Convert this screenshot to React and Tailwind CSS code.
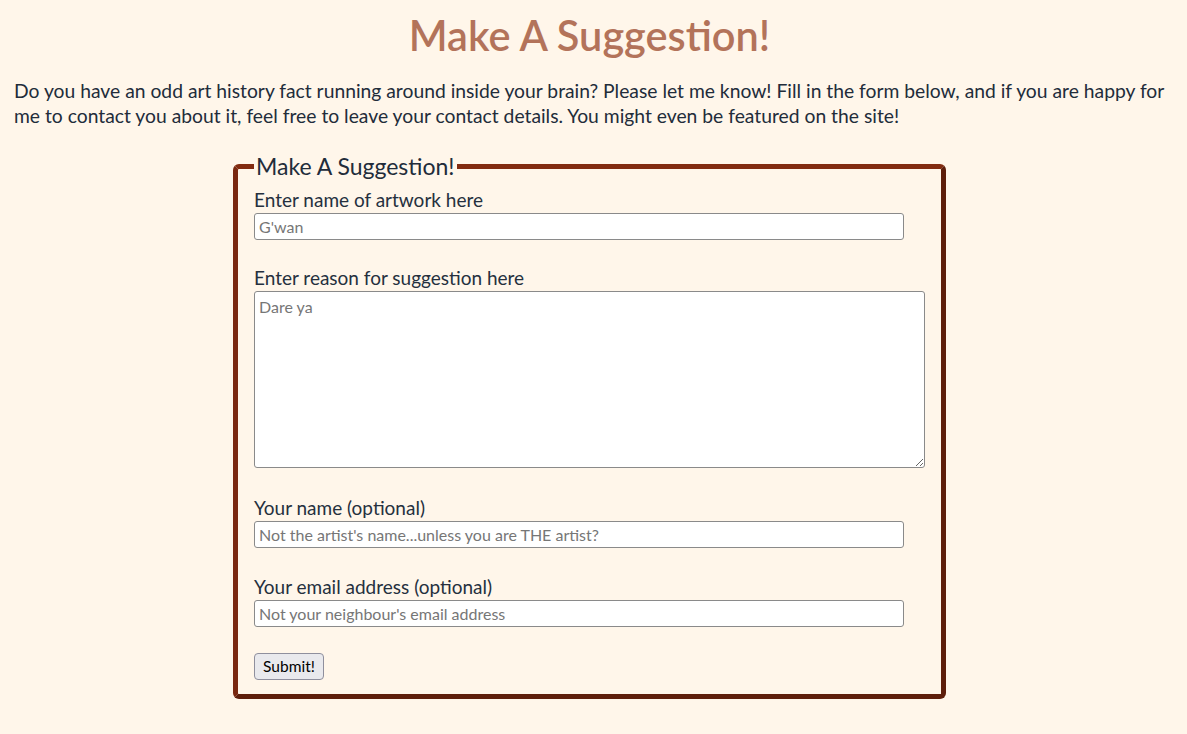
export default function App() {
  const label = "block text-[19px] leading-[22px] text-[#25303e]";
  const input =
    "block w-[650px] h-[27px] border border-[#8a8a8a] rounded-[3px] bg-white px-[4px] text-[16px] text-[#222] placeholder:text-[#767676] outline-none";
  return (
    <div className="min-h-[734px] bg-[#fff6ea] [font-family:'Source_Sans_Pro','Lato',sans-serif]">
      <div className="w-[1179px]">
        <h1 className="pt-[13px] text-center text-[41.5px] leading-[44px] font-semibold text-[#b3735a] [font-family:'Lato',sans-serif]">
          Make A Suggestion!
        </h1>
        <p className="mt-[21px] px-[14px] text-[19.3px] leading-[25px] text-[#222c3a]">
          Do you have an odd art history fact running around inside your brain? Please let me know! Fill in the form below, and if you are happy for me to contact you about it, feel free to leave your contact details. You might even be featured on the site!
        </p>
        <fieldset className="mx-auto mt-[26px] w-[712px] rounded-[6px] border-[5px] border-solid border-t-[#822b10] border-l-[#7a2810] border-r-[#5e1e0b] border-b-[#5e1e0b] pl-[16px] pr-[16px] pb-[14px]">
          <legend className="px-[2px] text-[23px] leading-[24px] text-[#222c3a]">
            Make A Suggestion!
          </legend>
          <label className={label + " mt-[11px]"}>Enter name of artwork here</label>
          <input className={input + " mt-[2px]"} placeholder="G'wan" />
          <label className={label + " mt-[27px]"}>Enter reason for suggestion here</label>
          <textarea
            className="block mt-[2px] w-[671px] h-[177px] border border-[#8a8a8a] rounded-[3px] bg-white px-[4px] py-[5px] text-[16px] leading-[20px] text-[#222] placeholder:text-[#767676] outline-none"
            placeholder="Dare ya"
          />
          <label className={label + " mt-[29px]"}>Your name (optional)</label>
          <input className={input + " mt-[2px]"} placeholder="Not the artist's name...unless you are THE artist?" />
          <label className={label + " mt-[28px]"}>Your email address (optional)</label>
          <input className={input + " mt-[2px]"} placeholder="Not your neighbour's email address" />
          <button className="mt-[26px] h-[27px] w-[70px] rounded-[4px] border border-[#8f8f9d] bg-[#e9e9ed] text-[15.5px] text-black">
            Submit!
          </button>
        </fieldset>
      </div>
    </div>
  );
}
